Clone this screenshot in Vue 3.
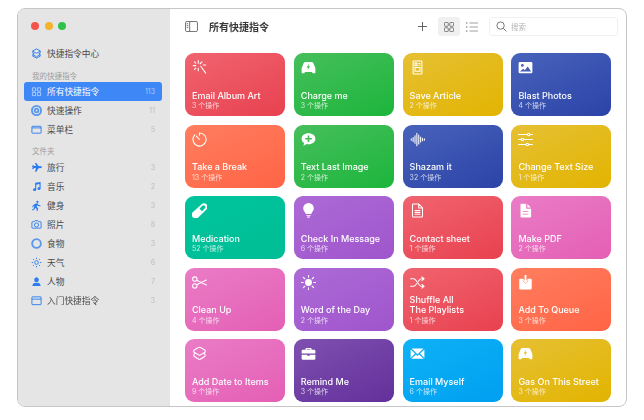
<template>
  <div class="page">
    <div class="window">
      <aside class="sidebar">
        <div class="lights">
          <i class="light red"></i>
          <i class="light yellow"></i>
          <i class="light green"></i>
        </div>

        <div class="row gallery">
          <svg class="side-icon" viewBox="0 0 24 24"><path v-bind="sideIcons.layers" /></svg>
          <span class="name">快捷指令中心</span>
        </div>

        <h4 class="heading first">我的快捷指令</h4>
        <div
          v-for="item in myItems"
          :key="item.name"
          class="row"
          :class="{ active: item.active }"
        >
          <svg class="side-icon" viewBox="0 0 24 24"><path v-bind="sideIcons[item.icon]" /></svg>
          <span class="name">{{ item.name }}</span>
          <span class="count">{{ item.count }}</span>
        </div>

        <h4 class="heading">文件夹</h4>
        <div v-for="item in folders" :key="item.name" class="row">
          <svg class="side-icon" viewBox="0 0 24 24"><path v-bind="sideIcons[item.icon]" /></svg>
          <span class="name">{{ item.name }}</span>
          <span class="count">{{ item.count }}</span>
        </div>
      </aside>

      <main class="main">
        <header class="toolbar">
          <svg class="panel-icon" viewBox="0 0 14 12">
            <rect x="0.5" y="0.5" width="13" height="11" rx="1.5" />
            <path d="M5 .5v11M1.8 3h1.6M1.8 5h1.6M1.8 7h1.6" />
          </svg>
          <h1 class="title">所有快捷指令</h1>
          <svg class="plus" viewBox="0 0 10 10"><path d="M5 0v10M0 5h10" /></svg>
          <div class="toggle">
            <svg class="grid-icon" viewBox="0 0 12 12">
              <rect x="0.5" y="0.5" width="4.6" height="4.6" rx="1" />
              <rect x="6.9" y="0.5" width="4.6" height="4.6" rx="1" />
              <rect x="0.5" y="6.9" width="4.6" height="4.6" rx="1" />
              <rect x="6.9" y="6.9" width="4.6" height="4.6" rx="1" />
            </svg>
          </div>
          <svg class="list-icon" viewBox="0 0 12 10">
            <path d="M3.5 1h8.5M3.5 5h8.5M3.5 9h8.5" />
            <path class="dots" d="M0 1h1.4M0 5h1.4M0 9h1.4" />
          </svg>
          <div class="search">
            <svg class="glass" viewBox="0 0 12 12">
              <circle cx="5" cy="5" r="4" />
              <path d="M8 8l3.4 3.4" />
            </svg>
            <span>搜索</span>
          </div>
        </header>

        <section class="cards">
          <article v-for="card in cards" :key="card.title" class="card" :class="card.color">
            <svg class="card-icon" viewBox="0 0 24 24">
              <path v-if="card.fill" class="solid" fill-rule="evenodd" :d="card.fill" />
              <path v-if="card.line" class="line" :d="card.line" />
            </svg>
            <div class="text">
              <h3>{{ card.title }}</h3>
              <p>{{ card.steps }} 个操作</p>
            </div>
          </article>
        </section>
      </main>
    </div>
  </div>
</template>

<script setup>
const sideIcons = {
  layers: { class: 'stroke', d: 'M12 2l8 4v5l-3 1.500 3 1.500v4l-8 4-8-4v-4l3-1.500L4 11V6zM4 7l8 4.500L20 7M4 14.500l8 4.500 8-4.500' },
  grid: { class: 'stroke', d: 'M3 4h7v7H3zM14 4h7v7h-7zM3 14h7v7H3zM14 14h7v7h-7z' },
  gear: { class: 'stroke thick', d: 'M12 2a10 10 0 1 0 0 20 10 10 0 0 0 0-20zM12 8a4 4 0 1 0 0 8 4 4 0 0 0 0-8z' },
  bar: { class: 'stroke', d: 'M3 5h18a1 1 0 0 1 1 1v13a1 1 0 0 1-1 1H3a1 1 0 0 1-1-1V6a1 1 0 0 1 1-1zM2 8.500h20' },
  plane: { d: 'M2 9l2 3-2 3 3 .3 2-2 4 .2-2.500 8h3l5-8 6-.5c1.500-.3 1.500-3.700 0-4l-6-.5-5-6.500h-3l2.500 6.500-4 .2-2-2z' },
  music: { d: 'M9 4l12-2v14.500a3.500 3 0 1 1-2.500-2.900V6.500L11.500 8v11a3.500 3 0 1 1-2.500-2.900z' },
  run: { d: 'M14 1.500a2.500 2.500 0 1 1 0 5 2.500 2.500 0 0 1 0-5zM9 8l5-1 3 4 4 1-.5 2-5-1-2-2-1 4 3 3-1 6h-2l-.5-5-3-2-1 3-5 3-1-2 4-2.500 1.500-6-2 1-1 3-2-.5 1.500-4z' },
  camera: { class: 'stroke', d: 'M3 6h4l2-2.500h6L17 6h4a1 1 0 0 1 1 1v12a1 1 0 0 1-1 1H3a1 1 0 0 1-1-1V7a1 1 0 0 1 1-1zM12 8.500a4.500 4.500 0 1 0 0 9 4.500 4.500 0 0 0 0-9z' },
  food: { class: 'stroke thick', d: 'M12 2.500a9.500 9.500 0 1 0 0 19 9.500 9.500 0 0 0 0-19z' },
  sun: { class: 'stroke', d: 'M12 8a4 4 0 1 0 0 8 4 4 0 0 0 0-8zM12 1.500v3M12 19.500v3M1.500 12h3M19.500 12h3M4.500 4.500l2.200 2.200M17.300 17.300l2.200 2.200M4.500 19.500l2.200-2.200M17.300 6.700l2.200-2.200' },
  person: { d: 'M12 2.500a5 5.500 0 1 1 0 11 5 5.500 0 0 1 0-11zM3 22c0-5 3-7 6-7.500 2 1 4 1 6 0 3 .5 6 2.500 6 7.500z' },
  folder: { class: 'stroke', d: 'M3 4h18a1 1 0 0 1 1 1v15a1 1 0 0 1-1 1H3a1 1 0 0 1-1-1V5a1 1 0 0 1 1-1zM2 9h20' }
}

const myItems = [
  { name: '所有快捷指令', count: 113, icon: 'grid', active: true },
  { name: '快速操作', count: 11, icon: 'gear' },
  { name: '菜单栏', count: 5, icon: 'bar' }
]

const folders = [
  { name: '旅行', count: 3, icon: 'plane' },
  { name: '音乐', count: 2, icon: 'music' },
  { name: '健身', count: 3, icon: 'run' },
  { name: '照片', count: 8, icon: 'camera' },
  { name: '食物', count: 3, icon: 'food' },
  { name: '天气', count: 6, icon: 'sun' },
  { name: '人物', count: 7, icon: 'person' },
  { name: '入门快捷指令', count: 3, icon: 'folder' }
]

const car = 'M8 3h8c2.500 0 3.500 1 4.200 3L23 13v7a1 1 0 0 1-1 1h-3a1 1 0 0 1-1-1v-1H6v1a1 1 0 0 1-1 1H2a1 1 0 0 1-1-1v-7l2.800-7C4.500 4 5.500 3 8 3zM13 5.500l-4 6.500h2.500l-1 4.500 4-6.500h-2.500z'

const cards = [
  { title: 'Email Album Art', steps: 3, color: 'red', line: 'M10 1v4M10 13v4M2 9h4M16 3l-3 3M4 3l2 2M4 15l2-2M14 10l8 11M18 8h4' },
  { title: 'Charge me', steps: 3, color: 'green', fill: car },
  { title: 'Save Article', steps: 2, color: 'yellow', line: 'M6 1.500h12a1 1 0 0 1 1 1v19a1 1 0 0 1-1 1H6a1 1 0 0 1-1-1v-19a1 1 0 0 1 1-1zM8 5h3v4H8zM14 5.500h2M14 8.500h2M8 12h8v6H8z' },
  { title: 'Blast Photos', steps: 4, color: 'blue', fill: 'M3 3h18a2 2 0 0 1 2 2v14a2 2 0 0 1-2 2H3a2 2 0 0 1-2-2V5a2 2 0 0 1 2-2zM7 6.500a2.200 2.200 0 1 0 0 4.400 2.200 2.200 0 0 0 0-4.400zM3 18.500h18l-5.500-8-4.500 6-2.500-2.500z' },
  { title: 'Take a Break', steps: 13, color: 'orange', line: 'M12 1.500a10.500 10.500 0 1 1-7.500 3.200M12 12L7 6.500M12 1.500v3.500' },
  { title: 'Text Last Image', steps: 2, color: 'green', fill: 'M12 2c6.500 0 11 3.700 11 8.700s-4.500 8.800-11 8.800c-1 0-2 0-3-.3-1.500 1.300-3.500 2.500-5.500 2.800 1-1.300 1.500-3 1.500-4.300C2.500 16 1 13.500 1 10.700 1 5.700 5.500 2 12 2zM10.700 5.500v4h-4v2.400h4v4h2.600v-4h4V9.500h-4v-4z' },
  { title: 'Shazam it', steps: 32, color: 'blue', line: 'M2 11v2M5 9v6M8 6v12M11 2v20M14 5v14M17 8v8M20 10v4M23 11v2' },
  { title: 'Change Text Size', steps: 1, color: 'yellow', line: 'M1 4h14M19 4h4M1 12h4M9 12h14M1 20h12M17 20h6M17 2a2 2 0 1 0 0 4 2 2 0 0 0 0-4zM7 10a2 2 0 1 0 0 4 2 2 0 0 0 0-4zM15 18a2 2 0 1 0 0 4 2 2 0 0 0 0-4z' },
  { title: 'Medication', steps: 52, color: 'teal', fill: 'M15 2.500a6 6 0 0 1 8.500 0 6 6 0 0 1 0 7.500L10 23a6 6 0 0 1-8.500-8.500zM16.500 4.500L12 9l4 4 4.500-4.500a2.800 2.800 0 0 0-4-4z' },
  { title: 'Check In Message', steps: 6, color: 'purple', fill: 'M12 0a8.500 8.500 0 0 1 8.500 8.500c0 3.500-2.500 5.500-3.500 8-.2.500-.5 1-1 1H8c-.5 0-.8-.5-1-1-1-2.500-3.500-4.500-3.500-8A8.500 8.500 0 0 1 12 0zM8.500 19h7v1.500h-7zM9.500 21.500h5l-1 2h-3z' },
  { title: 'Contact sheet', steps: 1, color: 'red', line: 'M5 1.500h9l6 6V21a1.500 1.500 0 0 1-1.500 1.500h-13A1.500 1.500 0 0 1 4 21V3a1.500 1.500 0 0 1 1-1.500zM14 1.500V8h6M8 12h8M8 15h8M8 18h8' },
  { title: 'Make PDF', steps: 2, color: 'pink', fill: 'M5 1h8v8h8v12.500a1.500 1.500 0 0 1-1.500 1.500h-14A1.500 1.500 0 0 1 4 21.500v-19A1.500 1.500 0 0 1 5 1zM15 1.500L20.500 7H15zM7.500 13v1.500h9V13zM7.500 17v1.500h9V17z' },
  { title: 'Clean Up', steps: 4, color: 'pink', line: 'M4.500 3a3.500 3.500 0 1 0 0 7 3.500 3.500 0 0 0 0-7zM4.500 14a3.500 3.500 0 1 0 0 7 3.500 3.500 0 0 0 0-7zM7.500 8.500L23 16M7.500 15.500L23 8' },
  { title: 'Word of the Day', steps: 2, color: 'purple', fill: 'M12 6.500a5.500 5.500 0 1 1 0 11 5.500 5.500 0 0 1 0-11z', line: 'M12 .5v3M12 20.500v3M.5 12h3M20.500 12h3M3.800 3.800l2.200 2.200M18 18l2.200 2.200M3.800 20.200L6 18M18 6l2.200-2.200' },
  { title: 'Shuffle All\nThe Playlists', steps: 1, color: 'red', line: 'M1 6h5c4 0 8 12 12 12h4M1 18h5c1.500 0 3-1.500 4.500-4M13.500 10c1.500-2.500 3-4 4.500-4h4M19 3l3.500 3L19 9M19 15l3.500 3-3.500 3' },
  { title: 'Add To Queue', steps: 3, color: 'orange', fill: 'M4 6h5v2.500h-1l4 4.500 4-4.500h-1V6h5a2 2 0 0 1 2 2v13a2 2 0 0 1-2 2H4a2 2 0 0 1-2-2V8a2 2 0 0 1 2-2zM10.500 0h3v8.500H17L12 14 7 8.500h3.500z' },
  { title: 'Add Date to Items', steps: 9, color: 'pink', line: 'M12 2c1 0 8 4 9 5 1 1.500 0 3-1 3.500L12 15l-8-4.500C3 10 2 8.500 3 7c1-1 8-5 9-5zM5 11.500c-1.500 1-3 2.500-2 4.500 1 1 8 5.500 9 5.500s8-4.500 9-5.500c1-2-.5-3.500-2-4.500' },
  { title: 'Remind Me', steps: 3, color: 'violet', fill: 'M9 3h6a2 2 0 0 1 2 2v1h4a2 2 0 0 1 2 2v4H1V8a2 2 0 0 1 2-2h4V5a2 2 0 0 1 2-2zM9 5v1h6V5zM1 14h9v1.500h4V14h9v6a2 2 0 0 1-2 2H3a2 2 0 0 1-2-2z' },
  { title: 'Email Myself', steps: 6, color: 'sky', fill: 'M2.500 4h19L12 13zM1 5.500L8 12l-7 7zM23 5.500V19l-7-7zM9.500 13.500l2.500 2.300 2.500-2.300L22 20.500H2z' },
  { title: 'Gas On This Street', steps: 3, color: 'yellow', fill: car }
]
</script>

<style>
body {
  background: #fff;
}
</style>

<style scoped>
.page {
  width: 644px;
  height: 420px;
  box-sizing: border-box;
  padding: 8px 17px 13px;
  overflow: hidden;
  font-family: Inter, "Noto Sans CJK SC", sans-serif;
}
.window {
  display: flex;
  height: 100%;
  box-sizing: border-box;
  overflow: hidden;
  background: #fff;
  border: 1px solid #c6c6c6;
  border-radius: 8px;
  filter: blur(0.45px);
}

.sidebar {
  flex: 0 0 152px;
  box-sizing: border-box;
  padding: 13px 8px 0 6px;
  background: #e5e5e5;
  color: #4a4a4a;
}
.lights {
  display: flex;
  gap: 5.500px;
  height: 9px;
  padding-left: 7px;
  margin-bottom: 13px;
}
.light {
  width: 8px;
  height: 8px;
  border-radius: 50%;
}
.light.red { background: #f4544c; }
.light.yellow { background: #f5b32d; }
.light.green { background: #2fc24a; }

.row {
  display: flex;
  align-items: center;
  height: 19px;
  padding: 0 7px;
  border-radius: 3px;
  font-size: 8.700px;
}
.gallery {
  margin-bottom: 9px;
}
.side-icon {
  flex: none;
  width: 11px;
  height: 11px;
  margin-right: 5px;
  fill: #2b7cf0;
}
.side-icon .stroke {
  fill: none;
  stroke: #2b7cf0;
  stroke-width: 2;
}
.side-icon .thick {
  stroke-width: 4;
  stroke-opacity: 0.75;
}
.name {
  flex: 1;
}
.count {
  color: #bdbdbd;
  font-size: 7px;
}
.heading {
  margin: 8px 0 2px 8px;
  height: 9px;
  color: #9d9d9d;
  font-size: 7.500px;
  font-weight: 400;
  line-height: 9px;
}
.heading.first {
  margin: 5px 0 1px 8px;
}
.row.active {
  background: #3d87f7;
  color: #fff;
}
.row.active .count {
  color: #a9cbfb;
}
.row.active .side-icon .stroke {
  stroke: #d8e7fd;
  stroke-width: 1.500;
}

.main {
  flex: 1;
  min-width: 0;
  padding: 0 15px;
}
.toolbar {
  display: flex;
  align-items: center;
  height: 35px;
  margin: 0 -7px 9px 0;
}
.panel-icon {
  width: 13px;
  height: 11px;
  margin-right: 11px;
  fill: none;
  stroke: #666;
  stroke-width: 1;
}
.title {
  margin: 0;
  flex: 1;
  color: #3a3a3a;
  font-size: 10px;
  font-weight: 600;
}
.plus {
  width: 9px;
  height: 9px;
  margin-right: 11px;
  fill: none;
  stroke: #555;
  stroke-width: 1;
}
.toggle {
  display: flex;
  align-items: center;
  justify-content: center;
  width: 22px;
  height: 19px;
  margin-right: 6px;
  border-radius: 3px;
  background: #f0f0f0;
}
.grid-icon {
  width: 10px;
  height: 10px;
  fill: none;
  stroke: #666;
  stroke-width: 1;
}
.list-icon {
  width: 12px;
  height: 10px;
  margin-right: 11px;
  fill: none;
  stroke: #888;
  stroke-width: 0.800;
}
.list-icon .dots {
  stroke: #666;
  stroke-width: 1.200;
}
.search {
  display: flex;
  align-items: center;
  gap: 4px;
  width: 129px;
  height: 19px;
  box-sizing: border-box;
  padding-left: 6px;
  border: 1px solid #f0f0f0;
  border-radius: 3px;
  color: #b5b5b5;
  font-size: 7.500px;
}
.glass {
  width: 11px;
  height: 11px;
  fill: none;
  stroke: #6b6b6b;
  stroke-width: 1;
}

.cards {
  display: grid;
  grid-template-columns: repeat(4, 100px);
  grid-auto-rows: 63px;
  column-gap: 8.800px;
  row-gap: 8.500px;
}
.card {
  display: flex;
  flex-direction: column;
  justify-content: space-between;
  box-sizing: border-box;
  padding: 7px 7px 6px;
  border-radius: 9px;
  color: #fff;
}
.card-icon {
  flex: none;
  width: 15px;
  height: 15px;
}
.solid {
  fill: #fff;
}
.line {
  fill: none;
  stroke: #fff;
  stroke-width: 1.700;
  stroke-linecap: round;
}
.text h3 {
  margin: 0;
  font-size: 9px;
  font-weight: 500;
  line-height: 10.500px;
  white-space: pre-line;
}
.text p {
  margin: 0;
  font-size: 7px;
  line-height: 9px;
  opacity: 0.75;
}
.red { background: linear-gradient(155deg, #f0646f, #e8414f); }
.green { background: linear-gradient(155deg, #47bf5c, #1cb53b); }
.yellow { background: linear-gradient(155deg, #e6c034, #e2b400); }
.blue { background: linear-gradient(155deg, #4863bb, #2b43a7); }
.orange { background: linear-gradient(155deg, #ff7e5f, #ff6445); }
.teal { background: linear-gradient(155deg, #00c49d, #00bd95); }
.purple { background: linear-gradient(155deg, #ad6ad6, #9f55cc); }
.pink { background: linear-gradient(155deg, #ea7cc6, #e45fb5); }
.violet { background: linear-gradient(155deg, #7f50b0, #63309b); }
.sky { background: linear-gradient(155deg, #0eb2f6, #009ff0); }
</style>
